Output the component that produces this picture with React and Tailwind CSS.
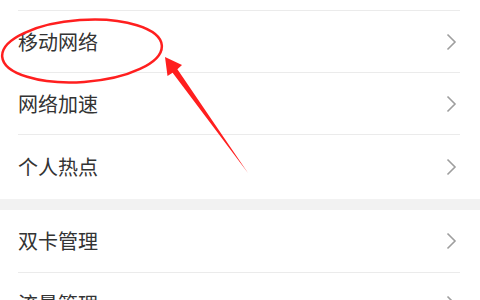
const Chevron = () => (
    <svg width="11" height="18" viewBox="0 0 11 18" className="mr-[3px]">
        <polyline points="1.5,1.5 9,9 1.5,16.5" fill="none" stroke="#9e9e9e" strokeWidth="1.6" />
    </svg>
);

const Row = ({ label, height = 'h-[62px]', border = true }) => (
    <div
        className={`ml-[18px] w-[442px] flex items-center justify-between ${height} ${border ? 'border-b border-[#ebebeb]' : ''}`}
    >
        <span className="text-[20px] leading-none text-[#333333]">{label}</span>
        <Chevron />
    </div>
);

const App = () => {
    return (
        <div
            className="relative w-[480px] h-[300px] overflow-hidden bg-white"
            style={{ fontFamily: '"Noto Sans CJK SC", "Noto Sans", sans-serif' }}
        >
            <div className="ml-[18px] w-[442px] h-[11px] border-b border-[#ebebeb]" />
            <Row label="移动网络" />
            <Row label="网络加速" />
            <Row label="个人热点" height="h-[64px]" border={false} />
            <div className="h-[11px] bg-[#f2f2f2]" />
            <Row label="双卡管理" height="h-[63px]" />
            <Row label="流量管理" />

            {/* annotation */}
            <svg className="absolute inset-0 pointer-events-none" width="480" height="300" viewBox="0 0 480 300">
                <ellipse
                    cx="82"
                    cy="51"
                    rx="80"
                    ry="31"
                    transform="rotate(-4 82 51)"
                    fill="none"
                    stroke="#ff1f1f"
                    strokeWidth="2.5"
                />
                <polygon
                    points="165,57 182,65 177.4,69.3 248,173 172.6,72.7 167.5,76"
                    fill="#ff1f1f"
                />
            </svg>
        </div>
    );
};

export default App;
